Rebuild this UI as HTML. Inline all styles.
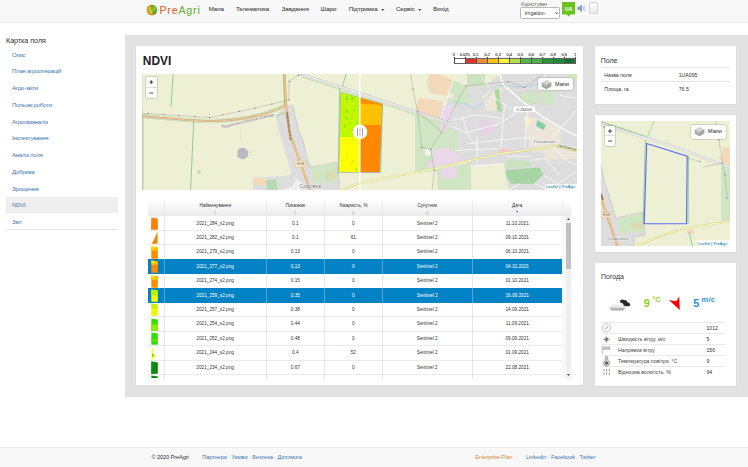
<!DOCTYPE html>
<html><head><meta charset="utf-8"><style>
html,body{margin:0;padding:0;}
body{width:748px;height:467px;overflow:hidden;position:relative;background:#fff;font-family:'Liberation Sans',sans-serif;}
.t{position:absolute;line-height:1;white-space:nowrap;}
.b{position:absolute;}
</style></head><body>
<div class="b" style="left:0.00px;top:0.00px;width:748.00px;height:22.00px;background:#f8f8f8;border-bottom:0.6px solid #ededed;"></div>
<svg class="b" style="left:144.6px;top:2.7px" width="14" height="14" viewBox="0 0 14 14">
<defs><linearGradient id="lg2" x1="0.2" y1="0" x2="0.9" y2="1"><stop offset="0" stop-color="#3f8f1e"/><stop offset="0.5" stop-color="#8cc43c"/><stop offset="1" stop-color="#3a7d1c"/></linearGradient>
<linearGradient id="lg" x1="0" y1="0" x2="1" y2="1"><stop offset="0" stop-color="#f0a020"/><stop offset="1" stop-color="#d88a10"/></linearGradient></defs>
<circle cx="7" cy="7" r="6.3" fill="#fff" opacity="0.9"/>
<circle cx="7" cy="7" r="5.2" fill="url(#lg2)"/>
<path d="M4.2 2.6C2.4 3.6 1.7 5.4 1.8 7.2C2 9.8 4 11.9 6.6 12.2C7.6 12.3 8.5 12.1 9.4 11.8C7.6 10.2 6.6 8.2 6.4 5.8C6.3 4.4 6.5 3.2 6.6 1.85C5.8 1.9 5 2.2 4.2 2.6Z" fill="url(#lg)"/>
<path d="M3.8 4.6C3.2 7.2 4.4 9.8 7 11.3C7.2 9 6.4 6.4 5 4Z" fill="#c4d62c" opacity="0.9"/>
<circle cx="7" cy="7" r="5.2" fill="none" stroke="#5a6a40" stroke-width="0.3" opacity="0.5"/>
</svg>
<div class="t" style="left:159.40px;top:4.93px;font-size:10.6px;color:#333;font-weight:normal;letter-spacing:0.85px;-webkit-text-stroke:0.35px currentColor;"><span style="color:#dc6436;-webkit-text-stroke:0.12px #dc6436">Pre</span><span style="color:#66b236;-webkit-text-stroke:0.12px #66b236">Agri</span></div>
<div class="t" style="left:208.70px;top:6.45px;font-size:6.2px;color:#3a3a3a;font-weight:normal;letter-spacing:-0.08px;-webkit-text-stroke:0.08px #666;">Мапа</div>
<div class="t" style="left:236.00px;top:6.45px;font-size:6.2px;color:#3a3a3a;font-weight:normal;letter-spacing:-0.08px;-webkit-text-stroke:0.08px #666;">Телематика</div>
<div class="t" style="left:281.70px;top:6.45px;font-size:6.2px;color:#3a3a3a;font-weight:normal;letter-spacing:-0.08px;-webkit-text-stroke:0.08px #666;">Завдання</div>
<div class="t" style="left:320.60px;top:6.45px;font-size:6.2px;color:#3a3a3a;font-weight:normal;letter-spacing:-0.08px;-webkit-text-stroke:0.08px #666;">Шари</div>
<div class="t" style="left:348.70px;top:6.45px;font-size:6.2px;color:#3a3a3a;font-weight:normal;letter-spacing:-0.08px;-webkit-text-stroke:0.08px #666;">Підтримка</div>
<div class="t" style="left:395.90px;top:6.45px;font-size:6.2px;color:#3a3a3a;font-weight:normal;letter-spacing:-0.08px;-webkit-text-stroke:0.08px #666;">Сервіс</div>
<div class="t" style="left:433.30px;top:6.45px;font-size:6.2px;color:#3a3a3a;font-weight:normal;letter-spacing:-0.08px;-webkit-text-stroke:0.08px #666;">Вихід</div>
<svg class="b" style="left:381.20px;top:9.3px" width="3.6" height="2" viewBox="0 0 3.6 2"><path d="M0 0H3.6L1.8 2Z" fill="#555"/></svg>
<svg class="b" style="left:418.10px;top:9.3px" width="3.6" height="2" viewBox="0 0 3.6 2"><path d="M0 0H3.6L1.8 2Z" fill="#555"/></svg>
<div class="t" style="left:521.00px;top:2.51px;font-size:4.95px;color:#666;font-weight:normal;">Користувач</div>
<div class="b" style="left:520.40px;top:7.40px;width:39.30px;height:11.30px;background:#fff;border:0.6px solid #b8b8b8;border-radius:1.6px;box-sizing:border-box;"></div>
<div class="t" style="left:524.70px;top:10.80px;font-size:5.2px;color:#333;font-weight:normal;">irrigation</div>
<svg class="b" style="left:554.5px;top:12px" width="3.4" height="2.4" viewBox="0 0 3.4 2.4"><path d="M0.4 0.4L1.7 1.8L3.0 0.4" fill="none" stroke="#222" stroke-width="0.9"/></svg>
<svg class="b" style="left:561.9px;top:2px" width="13.2" height="15" viewBox="0 0 13.2 15"><path d="M0 0H13.2V12.4H8.2L6.6 14.8L5 12.4H0Z" fill="#6cc21c"/></svg>
<div class="t" style="left:468.50px;width:200px;text-align:center;top:6.50px;font-size:5.2px;color:#fff;font-weight:bold;">UA</div>
<svg class="b" style="left:576.8px;top:3.8px" width="9.2" height="8.6" viewBox="0 0 9.2 8.6">
<path d="M0.3 2.8H2.2L5 0.4V8.2L2.2 5.8H0.3Z" fill="#8aa0b8"/><path d="M6 2.4Q7 4.3 6 6.2" stroke="#9bb3cc" stroke-width="0.9" fill="none"/><path d="M7.3 1.4Q8.9 4.3 7.3 7.2" stroke="#b5c8dc" stroke-width="0.8" fill="none"/></svg>
<div class="b" style="left:588.90px;top:2.00px;width:9.60px;height:12.00px;background:linear-gradient(#fdfdfd,#e8e8e8);border:0.5px solid #d4d4d4;border-radius:1px;box-sizing:border-box;"></div>
<div class="t" style="left:6.00px;top:37.11px;font-size:7.2px;color:#333;font-weight:normal;letter-spacing:-0.05px;">Картка поля</div>
<div class="b" style="left:6.00px;top:197.00px;width:111.80px;height:16.00px;background:#eeeeee;"></div>
<div class="t" style="left:12.00px;top:51.74px;font-size:6.1px;color:#4677b8;font-weight:normal;letter-spacing:-0.28px;">Опис</div>
<div class="t" style="left:12.00px;top:68.49px;font-size:6.1px;color:#4677b8;font-weight:normal;letter-spacing:-0.28px;">План агрооперацій</div>
<div class="t" style="left:12.00px;top:85.24px;font-size:6.1px;color:#4677b8;font-weight:normal;letter-spacing:-0.28px;">Агро-звіти</div>
<div class="t" style="left:12.00px;top:101.99px;font-size:6.1px;color:#4677b8;font-weight:normal;letter-spacing:-0.28px;">Польові роботи</div>
<div class="t" style="left:12.00px;top:118.74px;font-size:6.1px;color:#4677b8;font-weight:normal;letter-spacing:-0.28px;">Агрохіманаліз</div>
<div class="t" style="left:12.00px;top:135.49px;font-size:6.1px;color:#4677b8;font-weight:normal;letter-spacing:-0.28px;">Інспектування</div>
<div class="t" style="left:12.00px;top:152.24px;font-size:6.1px;color:#4677b8;font-weight:normal;letter-spacing:-0.28px;">Аналіз поля</div>
<div class="t" style="left:12.00px;top:168.99px;font-size:6.1px;color:#4677b8;font-weight:normal;letter-spacing:-0.28px;">Добрива</div>
<div class="t" style="left:12.00px;top:185.74px;font-size:6.1px;color:#4677b8;font-weight:normal;letter-spacing:-0.28px;">Зрощення</div>
<div class="t" style="left:12.00px;top:202.49px;font-size:6.1px;color:#4677b8;font-weight:normal;letter-spacing:-0.28px;">NDVI</div>
<div class="t" style="left:12.00px;top:219.24px;font-size:6.1px;color:#4677b8;font-weight:normal;letter-spacing:-0.28px;">Звіт</div>
<div class="b" style="left:6.00px;top:229.30px;width:112.00px;height:0.50px;background:#e6e6e6;"></div>
<div class="b" style="left:125.00px;top:35.00px;width:623.00px;height:361.60px;background:#e2e2e2;"></div>
<div class="b" style="left:136.00px;top:46.00px;width:447.00px;height:339.00px;background:#fff;box-shadow:0 0.5px 1.5px rgba(0,0,0,0.1);"></div>
<div class="b" style="left:595.00px;top:46.00px;width:141.30px;height:58.00px;background:#fff;box-shadow:0 0.5px 1.5px rgba(0,0,0,0.1);"></div>
<div class="b" style="left:595.00px;top:115.00px;width:141.30px;height:137.00px;background:#fff;box-shadow:0 0.5px 1.5px rgba(0,0,0,0.1);"></div>
<div class="b" style="left:595.00px;top:263.00px;width:141.30px;height:123.00px;background:#fff;box-shadow:0 0.5px 1.5px rgba(0,0,0,0.1);"></div>
<div class="b" style="left:0.00px;top:447.20px;width:748.00px;height:19.80px;background:#f8f8f8;border-top:0.5px solid #efefef;"></div>
<div class="t" style="left:151.40px;top:455.42px;font-size:5.65px;color:#333;font-weight:normal;letter-spacing:-0.1px;">© 2020 PreAgri</div>
<div class="t" style="left:202.20px;top:455.42px;font-size:5.65px;color:#3f7ab5;font-weight:normal;letter-spacing:-0.1px;">Партнери <span style="color:#999">·</span> Умови <span style="color:#999">·</span> Безпека <span style="color:#999">·</span> Допомога</div>
<div class="t" style="left:475.20px;top:455.42px;font-size:5.65px;color:#d48a3c;font-weight:normal;letter-spacing:-0.1px;">Enterprise Plan</div>
<div class="t" style="left:526.00px;top:455.42px;font-size:5.65px;color:#3f7ab5;font-weight:normal;letter-spacing:-0.1px;">Linkedin <span style="color:#999">·</span> Facebook <span style="color:#999">·</span> Twitter</div>
<div class="t" style="left:142.80px;top:55.83px;font-size:11.9px;color:#222;font-weight:bold;">NDVI</div>
<div class="b" style="left:453.80px;top:58.00px;width:11.00px;height:5.80px;background:#ffffff;"></div>
<div class="b" style="left:464.80px;top:58.00px;width:11.00px;height:5.80px;background:#e3312e;"></div>
<div class="b" style="left:475.80px;top:58.00px;width:11.50px;height:5.80px;background:#f08a3a;"></div>
<div class="b" style="left:487.30px;top:58.00px;width:10.80px;height:5.80px;background:#ffc20e;"></div>
<div class="b" style="left:498.10px;top:58.00px;width:11.20px;height:5.80px;background:#fff33b;"></div>
<div class="b" style="left:509.30px;top:58.00px;width:11.00px;height:5.80px;background:#b5dd4a;"></div>
<div class="b" style="left:520.30px;top:58.00px;width:11.00px;height:5.80px;background:#55b84a;"></div>
<div class="b" style="left:531.30px;top:58.00px;width:11.00px;height:5.80px;background:#4ab04a;"></div>
<div class="b" style="left:542.30px;top:58.00px;width:10.90px;height:5.80px;background:#24963c;"></div>
<div class="b" style="left:553.20px;top:58.00px;width:11.10px;height:5.80px;background:#1f8a3a;"></div>
<div class="b" style="left:564.30px;top:58.00px;width:10.70px;height:5.80px;background:#1b6e31;"></div>
<div class="b" style="left:453.80px;top:58.00px;width:121.20px;height:5.80px;border:0.4px solid #666;box-sizing:border-box;"></div>
<div class="b" style="left:453.60px;top:57.00px;width:0.40px;height:6.80px;background:#555;"></div>
<div class="t" style="left:353.80px;width:200px;text-align:center;top:52.51px;font-size:4.0px;color:#222;font-weight:normal;-webkit-text-stroke:0.1px #444;">0</div>
<div class="b" style="left:464.60px;top:57.00px;width:0.40px;height:6.80px;background:#555;"></div>
<div class="t" style="left:364.80px;width:200px;text-align:center;top:52.51px;font-size:4.0px;color:#222;font-weight:normal;-webkit-text-stroke:0.1px #444;">0.025</div>
<div class="b" style="left:475.60px;top:57.00px;width:0.40px;height:6.80px;background:#555;"></div>
<div class="t" style="left:375.80px;width:200px;text-align:center;top:52.51px;font-size:4.0px;color:#222;font-weight:normal;-webkit-text-stroke:0.1px #444;">0.1</div>
<div class="b" style="left:487.10px;top:57.00px;width:0.40px;height:6.80px;background:#555;"></div>
<div class="t" style="left:387.30px;width:200px;text-align:center;top:52.51px;font-size:4.0px;color:#222;font-weight:normal;-webkit-text-stroke:0.1px #444;">0.2</div>
<div class="b" style="left:497.90px;top:57.00px;width:0.40px;height:6.80px;background:#555;"></div>
<div class="t" style="left:398.10px;width:200px;text-align:center;top:52.51px;font-size:4.0px;color:#222;font-weight:normal;-webkit-text-stroke:0.1px #444;">0.3</div>
<div class="b" style="left:509.10px;top:57.00px;width:0.40px;height:6.80px;background:#555;"></div>
<div class="t" style="left:409.30px;width:200px;text-align:center;top:52.51px;font-size:4.0px;color:#222;font-weight:normal;-webkit-text-stroke:0.1px #444;">0.4</div>
<div class="b" style="left:520.10px;top:57.00px;width:0.40px;height:6.80px;background:#555;"></div>
<div class="t" style="left:420.30px;width:200px;text-align:center;top:52.51px;font-size:4.0px;color:#222;font-weight:normal;-webkit-text-stroke:0.1px #444;">0.5</div>
<div class="b" style="left:531.10px;top:57.00px;width:0.40px;height:6.80px;background:#555;"></div>
<div class="t" style="left:431.30px;width:200px;text-align:center;top:52.51px;font-size:4.0px;color:#222;font-weight:normal;-webkit-text-stroke:0.1px #444;">0.6</div>
<div class="b" style="left:542.10px;top:57.00px;width:0.40px;height:6.80px;background:#555;"></div>
<div class="t" style="left:442.30px;width:200px;text-align:center;top:52.51px;font-size:4.0px;color:#222;font-weight:normal;-webkit-text-stroke:0.1px #444;">0.7</div>
<div class="b" style="left:553.00px;top:57.00px;width:0.40px;height:6.80px;background:#555;"></div>
<div class="t" style="left:453.20px;width:200px;text-align:center;top:52.51px;font-size:4.0px;color:#222;font-weight:normal;-webkit-text-stroke:0.1px #444;">0.8</div>
<div class="b" style="left:564.10px;top:57.00px;width:0.40px;height:6.80px;background:#555;"></div>
<div class="t" style="left:464.30px;width:200px;text-align:center;top:52.51px;font-size:4.0px;color:#222;font-weight:normal;-webkit-text-stroke:0.1px #444;">0.9</div>
<div class="b" style="left:574.80px;top:57.00px;width:0.40px;height:6.80px;background:#555;"></div>
<div class="t" style="left:475.00px;width:200px;text-align:center;top:52.51px;font-size:4.0px;color:#222;font-weight:normal;-webkit-text-stroke:0.1px #444;">1</div>
<div class="b" style="left:148.00px;top:202.00px;width:414.00px;height:13.80px;background:linear-gradient(#fbfbfb,#ececec);"></div>
<div class="b" style="left:562.00px;top:202.00px;width:9.20px;height:13.80px;background:linear-gradient(#fbfbfb,#ececec);"></div>
<div class="t" style="left:115.15px;width:200px;text-align:center;top:204.21px;font-size:4.6px;color:#333;font-weight:normal;">Найменування</div>
<svg class="b" style="left:211.95px;top:208.8px" width="6.4" height="8" viewBox="-2 -2 6.4 8"><path d="M0.3 1.6L1.2 0.5L2.1 1.6M0.3 2.4L1.2 3.5L2.1 2.4" fill="none" stroke="#8a8a8a" stroke-width="0.5"/></svg>
<div class="t" style="left:195.30px;width:200px;text-align:center;top:204.21px;font-size:4.6px;color:#333;font-weight:normal;">Показник</div>
<svg class="b" style="left:292.10px;top:208.8px" width="6.4" height="8" viewBox="-2 -2 6.4 8"><path d="M0.3 1.6L1.2 0.5L2.1 1.6M0.3 2.4L1.2 3.5L2.1 2.4" fill="none" stroke="#8a8a8a" stroke-width="0.5"/></svg>
<div class="t" style="left:253.35px;width:200px;text-align:center;top:204.21px;font-size:4.6px;color:#333;font-weight:normal;">Хмарність, %</div>
<svg class="b" style="left:350.15px;top:208.8px" width="6.4" height="8" viewBox="-2 -2 6.4 8"><path d="M0.3 1.6L1.2 0.5L2.1 1.6M0.3 2.4L1.2 3.5L2.1 2.4" fill="none" stroke="#8a8a8a" stroke-width="0.5"/></svg>
<div class="t" style="left:327.20px;width:200px;text-align:center;top:204.21px;font-size:4.6px;color:#333;font-weight:normal;">Супутник</div>
<svg class="b" style="left:424.00px;top:208.8px" width="6.4" height="8" viewBox="-2 -2 6.4 8"><path d="M0.3 1.6L1.2 0.5L2.1 1.6M0.3 2.4L1.2 3.5L2.1 2.4" fill="none" stroke="#8a8a8a" stroke-width="0.5"/></svg>
<div class="t" style="left:417.20px;width:200px;text-align:center;top:204.21px;font-size:4.6px;color:#333;font-weight:normal;">Дата</div>
<svg class="b" style="left:515.90px;top:211.3px" width="2.6" height="1.8" viewBox="0 0 2.6 1.8"><path d="M0 0H2.6L1.3 1.8Z" fill="#2a7fc9"/></svg>
<div class="b" style="left:164.15px;top:202.00px;width:0.50px;height:176.50px;background:#e8e8e8;"></div>
<div class="b" style="left:265.65px;top:202.00px;width:0.50px;height:176.50px;background:#e8e8e8;"></div>
<div class="b" style="left:324.45px;top:202.00px;width:0.50px;height:176.50px;background:#e8e8e8;"></div>
<div class="b" style="left:381.75px;top:202.00px;width:0.50px;height:176.50px;background:#e8e8e8;"></div>
<div class="b" style="left:472.15px;top:202.00px;width:0.50px;height:176.50px;background:#e8e8e8;"></div>
<div class="b" style="left:561.75px;top:202.00px;width:0.50px;height:176.50px;background:#e8e8e8;"></div>
<div class="b" style="left:148px;top:215.8px;width:414px;height:162.7px;overflow:hidden;background:#fff">
<div class="b" style="left:0;top:14.20px;width:414px;height:0.6px;background:#ebebeb"></div>
<div class="b" style="left:0;top:28.60px;width:414px;height:0.6px;background:#ebebeb"></div>
<div class="b" style="left:0;top:43.60px;width:414px;height:14.40px;background:#0383c6"></div>
<div class="b" style="left:0;top:72.40px;width:414px;height:14.40px;background:#0383c6"></div>
<div class="b" style="left:0;top:100.60px;width:414px;height:0.6px;background:#ebebeb"></div>
<div class="b" style="left:0;top:115.00px;width:414px;height:0.6px;background:#ebebeb"></div>
<div class="b" style="left:0;top:129.40px;width:414px;height:0.6px;background:#ebebeb"></div>
<div class="b" style="left:0;top:143.80px;width:414px;height:0.6px;background:#ebebeb"></div>
<div class="b" style="left:0;top:158.20px;width:414px;height:0.6px;background:#ebebeb"></div>
<div class="b" style="left:0;top:172.60px;width:414px;height:0.6px;background:#ebebeb"></div>
</div>
<div class="b" style="left:164.15px;top:215.80px;width:0.50px;height:162.70px;background:rgba(200,200,200,0.45);"></div>
<div class="b" style="left:265.65px;top:215.80px;width:0.50px;height:162.70px;background:rgba(200,200,200,0.45);"></div>
<div class="b" style="left:324.45px;top:215.80px;width:0.50px;height:162.70px;background:rgba(200,200,200,0.45);"></div>
<div class="b" style="left:381.75px;top:215.80px;width:0.50px;height:162.70px;background:rgba(200,200,200,0.45);"></div>
<div class="b" style="left:472.15px;top:215.80px;width:0.50px;height:162.70px;background:rgba(200,200,200,0.45);"></div>
<div class="b" style="left:561.75px;top:215.80px;width:0.50px;height:162.70px;background:rgba(200,200,200,0.45);"></div>
<div class="t" style="left:115.15px;width:200px;text-align:center;top:221.62px;font-size:4.7px;color:#333;font-weight:normal;">2021_284_s2.png</div>
<div class="t" style="left:195.30px;width:200px;text-align:center;top:221.62px;font-size:4.7px;color:#333;font-weight:normal;">0.1</div>
<div class="t" style="left:253.35px;width:200px;text-align:center;top:221.62px;font-size:4.7px;color:#333;font-weight:normal;">0</div>
<div class="t" style="left:327.20px;width:200px;text-align:center;top:221.62px;font-size:4.7px;color:#333;font-weight:normal;">Sentinel 2</div>
<div class="t" style="left:417.20px;width:200px;text-align:center;top:221.62px;font-size:4.7px;color:#333;font-weight:normal;">11.10.2021</div>
<div class="t" style="left:115.15px;width:200px;text-align:center;top:236.02px;font-size:4.7px;color:#333;font-weight:normal;">2021_282_s2.png</div>
<div class="t" style="left:195.30px;width:200px;text-align:center;top:236.02px;font-size:4.7px;color:#333;font-weight:normal;">0.1</div>
<div class="t" style="left:253.35px;width:200px;text-align:center;top:236.02px;font-size:4.7px;color:#333;font-weight:normal;">61</div>
<div class="t" style="left:327.20px;width:200px;text-align:center;top:236.02px;font-size:4.7px;color:#333;font-weight:normal;">Sentinel 2</div>
<div class="t" style="left:417.20px;width:200px;text-align:center;top:236.02px;font-size:4.7px;color:#333;font-weight:normal;">09.10.2021</div>
<div class="t" style="left:115.15px;width:200px;text-align:center;top:250.42px;font-size:4.7px;color:#333;font-weight:normal;">2021_279_s2.png</div>
<div class="t" style="left:195.30px;width:200px;text-align:center;top:250.42px;font-size:4.7px;color:#333;font-weight:normal;">0.13</div>
<div class="t" style="left:253.35px;width:200px;text-align:center;top:250.42px;font-size:4.7px;color:#333;font-weight:normal;">0</div>
<div class="t" style="left:327.20px;width:200px;text-align:center;top:250.42px;font-size:4.7px;color:#333;font-weight:normal;">Sentinel 2</div>
<div class="t" style="left:417.20px;width:200px;text-align:center;top:250.42px;font-size:4.7px;color:#333;font-weight:normal;">06.10.2021</div>
<div class="t" style="left:115.15px;width:200px;text-align:center;top:264.82px;font-size:4.7px;color:#fff;font-weight:normal;">2021_277_s2.png</div>
<div class="t" style="left:195.30px;width:200px;text-align:center;top:264.82px;font-size:4.7px;color:#fff;font-weight:normal;">0.13</div>
<div class="t" style="left:253.35px;width:200px;text-align:center;top:264.82px;font-size:4.7px;color:#fff;font-weight:normal;">0</div>
<div class="t" style="left:327.20px;width:200px;text-align:center;top:264.82px;font-size:4.7px;color:#fff;font-weight:normal;">Sentinel 2</div>
<div class="t" style="left:417.20px;width:200px;text-align:center;top:264.82px;font-size:4.7px;color:#fff;font-weight:normal;">04.10.2021</div>
<div class="t" style="left:115.15px;width:200px;text-align:center;top:279.22px;font-size:4.7px;color:#333;font-weight:normal;">2021_274_s2.png</div>
<div class="t" style="left:195.30px;width:200px;text-align:center;top:279.22px;font-size:4.7px;color:#333;font-weight:normal;">0.15</div>
<div class="t" style="left:253.35px;width:200px;text-align:center;top:279.22px;font-size:4.7px;color:#333;font-weight:normal;">0</div>
<div class="t" style="left:327.20px;width:200px;text-align:center;top:279.22px;font-size:4.7px;color:#333;font-weight:normal;">Sentinel 2</div>
<div class="t" style="left:417.20px;width:200px;text-align:center;top:279.22px;font-size:4.7px;color:#333;font-weight:normal;">01.10.2021</div>
<div class="t" style="left:115.15px;width:200px;text-align:center;top:293.62px;font-size:4.7px;color:#fff;font-weight:normal;">2021_259_s2.png</div>
<div class="t" style="left:195.30px;width:200px;text-align:center;top:293.62px;font-size:4.7px;color:#fff;font-weight:normal;">0.35</div>
<div class="t" style="left:253.35px;width:200px;text-align:center;top:293.62px;font-size:4.7px;color:#fff;font-weight:normal;">0</div>
<div class="t" style="left:327.20px;width:200px;text-align:center;top:293.62px;font-size:4.7px;color:#fff;font-weight:normal;">Sentinel 2</div>
<div class="t" style="left:417.20px;width:200px;text-align:center;top:293.62px;font-size:4.7px;color:#fff;font-weight:normal;">16.09.2021</div>
<div class="t" style="left:115.15px;width:200px;text-align:center;top:308.02px;font-size:4.7px;color:#333;font-weight:normal;">2021_257_s2.png</div>
<div class="t" style="left:195.30px;width:200px;text-align:center;top:308.02px;font-size:4.7px;color:#333;font-weight:normal;">0.38</div>
<div class="t" style="left:253.35px;width:200px;text-align:center;top:308.02px;font-size:4.7px;color:#333;font-weight:normal;">0</div>
<div class="t" style="left:327.20px;width:200px;text-align:center;top:308.02px;font-size:4.7px;color:#333;font-weight:normal;">Sentinel 2</div>
<div class="t" style="left:417.20px;width:200px;text-align:center;top:308.02px;font-size:4.7px;color:#333;font-weight:normal;">14.09.2021</div>
<div class="t" style="left:115.15px;width:200px;text-align:center;top:322.42px;font-size:4.7px;color:#333;font-weight:normal;">2021_254_s2.png</div>
<div class="t" style="left:195.30px;width:200px;text-align:center;top:322.42px;font-size:4.7px;color:#333;font-weight:normal;">0.44</div>
<div class="t" style="left:253.35px;width:200px;text-align:center;top:322.42px;font-size:4.7px;color:#333;font-weight:normal;">0</div>
<div class="t" style="left:327.20px;width:200px;text-align:center;top:322.42px;font-size:4.7px;color:#333;font-weight:normal;">Sentinel 2</div>
<div class="t" style="left:417.20px;width:200px;text-align:center;top:322.42px;font-size:4.7px;color:#333;font-weight:normal;">11.09.2021</div>
<div class="t" style="left:115.15px;width:200px;text-align:center;top:336.82px;font-size:4.7px;color:#333;font-weight:normal;">2021_252_s2.png</div>
<div class="t" style="left:195.30px;width:200px;text-align:center;top:336.82px;font-size:4.7px;color:#333;font-weight:normal;">0.48</div>
<div class="t" style="left:253.35px;width:200px;text-align:center;top:336.82px;font-size:4.7px;color:#333;font-weight:normal;">0</div>
<div class="t" style="left:327.20px;width:200px;text-align:center;top:336.82px;font-size:4.7px;color:#333;font-weight:normal;">Sentinel 2</div>
<div class="t" style="left:417.20px;width:200px;text-align:center;top:336.82px;font-size:4.7px;color:#333;font-weight:normal;">09.09.2021</div>
<div class="t" style="left:115.15px;width:200px;text-align:center;top:351.22px;font-size:4.7px;color:#333;font-weight:normal;">2021_244_s2.png</div>
<div class="t" style="left:195.30px;width:200px;text-align:center;top:351.22px;font-size:4.7px;color:#333;font-weight:normal;">0.4</div>
<div class="t" style="left:253.35px;width:200px;text-align:center;top:351.22px;font-size:4.7px;color:#333;font-weight:normal;">52</div>
<div class="t" style="left:327.20px;width:200px;text-align:center;top:351.22px;font-size:4.7px;color:#333;font-weight:normal;">Sentinel 2</div>
<div class="t" style="left:417.20px;width:200px;text-align:center;top:351.22px;font-size:4.7px;color:#333;font-weight:normal;">01.09.2021</div>
<div class="t" style="left:115.15px;width:200px;text-align:center;top:365.62px;font-size:4.7px;color:#333;font-weight:normal;">2021_234_s2.png</div>
<div class="t" style="left:195.30px;width:200px;text-align:center;top:365.62px;font-size:4.7px;color:#333;font-weight:normal;">0.67</div>
<div class="t" style="left:253.35px;width:200px;text-align:center;top:365.62px;font-size:4.7px;color:#333;font-weight:normal;">0</div>
<div class="t" style="left:327.20px;width:200px;text-align:center;top:365.62px;font-size:4.7px;color:#333;font-weight:normal;">Sentinel 2</div>
<div class="t" style="left:417.20px;width:200px;text-align:center;top:365.62px;font-size:4.7px;color:#333;font-weight:normal;">22.08.2021</div>
<svg class="b" style="left:151.1px;top:217.00px;overflow:hidden" width="7.2" height="13.00" viewBox="0 0 7.2 13.00"><path d="M0.3 0.5L6.8 1.6V12.8H0Z" fill="#ff7f00"/></svg>
<svg class="b" style="left:151.1px;top:231.40px;overflow:hidden" width="7.2" height="13.00" viewBox="0 0 7.2 13.00"><path d="M6.6 0.5V12.8H0.8L3.5 7.5Z" fill="#ff8000"/></svg>
<svg class="b" style="left:151.1px;top:245.80px;overflow:hidden" width="7.2" height="13.00" viewBox="0 0 7.2 13.00"><path d="M0.4 0.4L6.8 1.6V12.8H0.3Z" fill="#ff8a00"/><path d="M0.4 0.4L6.8 1.6V4.8H0.3Z" fill="#ffc400"/><path d="M0.4 0.4L4 1V3H0.3Z" fill="#ffde10"/></svg>
<svg class="b" style="left:151.1px;top:260.20px;overflow:hidden" width="7.2" height="13.00" viewBox="0 0 7.2 13.00"><path d="M0.4 0.4L6.8 1.6V12.8H0.3Z" fill="#ff8a00"/><path d="M0.4 0.4L6.8 1.6V4.8H0.3Z" fill="#ffc400"/><path d="M0.4 0.4L4 1V3H0.3Z" fill="#ffde10"/></svg>
<svg class="b" style="left:151.1px;top:274.60px;overflow:hidden" width="7.2" height="13.00" viewBox="0 0 7.2 13.00"><path d="M0.4 0.4L6.8 1.6V12.8H0.3Z" fill="#ff8a00"/><path d="M0.4 0.4L6.8 1.6V5H0.3Z" fill="#ffc000"/><path d="M0.4 0.4L4 1V3H0.3Z" fill="#ffe010"/></svg>
<svg class="b" style="left:151.1px;top:289.00px;overflow:hidden" width="7.2" height="13.00" viewBox="0 0 7.2 13.00"><path d="M0.4 0.4L6.8 1.6V12.8H0.3Z" fill="#f4ff00"/><path d="M0.4 0.4L6.8 1.6V6.5H0.3Z" fill="#b8f200"/></svg>
<svg class="b" style="left:151.1px;top:303.40px;overflow:hidden" width="7.2" height="13.00" viewBox="0 0 7.2 13.00"><path d="M0.4 0.4L6.8 1.6V12.8H0.3Z" fill="#f0f800"/><path d="M0.4 0.4L6.8 1.6V5.5H0.3Z" fill="#c8f010"/></svg>
<svg class="b" style="left:151.1px;top:317.80px;overflow:hidden" width="7.2" height="13.00" viewBox="0 0 7.2 13.00"><path d="M0.4 0.4L6.8 1.6V12.8H0.3Z" fill="#38e000"/><path d="M0.3 6.5L6.8 6.5V12.8H0.3Z" fill="#90ee00"/></svg>
<svg class="b" style="left:151.1px;top:332.20px;overflow:hidden" width="7.2" height="13.00" viewBox="0 0 7.2 13.00"><path d="M0.4 0.4L6.8 1.6V12.8H0.3Z" fill="#30dc10"/><path d="M0.3 7L6.8 6V10H0.3Z" fill="#58e010"/></svg>
<svg class="b" style="left:151.1px;top:346.60px;overflow:hidden" width="7.2" height="13.00" viewBox="0 0 7.2 13.00"><path d="M0.8 0.8L2.5 1.5L2 6L4.5 8.5L2 12L0.8 12.8Z" fill="#ffff10"/><path d="M0.8 6L3.5 8.2L1 10.5Z" fill="#70e000"/></svg>
<svg class="b" style="left:151.1px;top:361.00px;overflow:hidden" width="7.2" height="13.00" viewBox="0 0 7.2 13.00"><path d="M0.4 0.4L6.8 1.6V12.8H0.3Z" fill="#0a860a"/><path d="M0.4 0.4L3.5 1V12.8H0.3Z" fill="#109010"/></svg>
<svg class="b" style="left:151.1px;top:375.40px;overflow:hidden" width="7.2" height="2.90" viewBox="0 0 7.2 2.90"><path d="M0.4 0.4L6.8 1.6V6H0.3Z" fill="#0a860a"/></svg>
<div class="b" style="left:562.20px;top:216.00px;width:3.50px;height:162.50px;background:#f9f9f9;"></div>
<div class="b" style="left:565.70px;top:216.00px;width:5.50px;height:162.50px;background:#f0f0f0;"></div>
<div class="b" style="left:565.90px;top:223.00px;width:4.70px;height:46.40px;background:#c1c1c1;"></div>
<svg class="b" style="left:566.8px;top:218.4px" width="3" height="2" viewBox="0 0 3 2"><path d="M0 2H3L1.5 0Z" fill="#555"/></svg>
<svg class="b" style="left:566.8px;top:373.8px" width="3" height="2" viewBox="0 0 3 2"><path d="M0 0H3L1.5 2Z" fill="#555"/></svg>
<div class="t" style="left:600.70px;top:56.87px;font-size:7.0px;color:#333;font-weight:normal;">Поле</div>
<div class="b" style="left:600.70px;top:67.30px;width:129.80px;height:0.50px;background:#e4e4e4;"></div>
<div class="t" style="left:604.20px;top:72.60px;font-size:5.2px;color:#333;font-weight:normal;">Назва поля</div>
<div class="t" style="left:678.70px;top:72.60px;font-size:5.2px;color:#333;font-weight:normal;">1UA095</div>
<div class="b" style="left:600.70px;top:81.40px;width:129.80px;height:0.50px;background:#e4e4e4;"></div>
<div class="t" style="left:604.20px;top:86.70px;font-size:5.2px;color:#333;font-weight:normal;">Площа, га</div>
<div class="t" style="left:678.70px;top:86.70px;font-size:5.2px;color:#333;font-weight:normal;">76.5</div>
<div class="t" style="left:601.10px;top:273.66px;font-size:6.9px;color:#333;font-weight:normal;">Погода</div>
<div class="t" style="left:643.80px;top:297.67px;font-size:10.9px;color:#8fd014;font-weight:bold;">9</div>
<div class="t" style="left:652.30px;top:296.02px;font-size:7.3px;color:#8fd014;font-weight:bold;">°C</div>
<div class="t" style="left:693.20px;top:297.87px;font-size:10.9px;color:#2b8fd6;font-weight:bold;">5</div>
<div class="t" style="left:701.60px;top:295.85px;font-size:7.5px;color:#2b8fd6;font-weight:bold;letter-spacing:0.15px;">m/c</div>
<svg class="b" style="left:668px;top:296px" width="12.5" height="14.5" viewBox="668 296 12.5 14.5"><path d="M679.2 296.4L679.8 309.9L668.9 300.1L676.3 301.2Z" fill="#f00"/></svg>
<svg class="b" style="left:608px;top:298px" width="24" height="14" viewBox="0 0 24 14">
<defs><linearGradient id="cg" x1="0" y1="0" x2="0" y2="1"><stop offset="0" stop-color="#ffffff"/><stop offset="0.7" stop-color="#e8e8e8"/><stop offset="1" stop-color="#9a9a9a"/></linearGradient></defs>
<path d="M12 2.8C13 1.5 15 1.2 16.2 2.2C17.6 1.8 19.2 2.8 19.3 4.2C21 4.4 22.5 5.5 22.3 6.8C22 8.2 20.5 8.4 19 8.2H13Z" fill="#2a2a2a"/>
<path d="M3 11.5C1 11.5 0.8 9 2.6 8.6C2.8 6.6 4.6 5.4 6.3 6C7.2 3.6 10.4 3 12.2 4.8C14 4.4 15.8 5.8 15.6 7.6C17.2 7.8 17.8 9.2 17.3 10.4C17 11.2 16.2 11.5 15.4 11.5Z" fill="url(#cg)"/>
<path d="M3 11.6H15.6L15 12.6H3.6Z" fill="#8a8a8a" opacity="0.8"/>
</svg>
<div class="b" style="left:601.00px;top:322.25px;width:123.70px;height:0.50px;background:#e9e9e9;"></div>
<div class="b" style="left:601.00px;top:333.05px;width:123.70px;height:0.50px;background:#e9e9e9;"></div>
<div class="b" style="left:601.00px;top:343.95px;width:123.70px;height:0.50px;background:#e9e9e9;"></div>
<div class="b" style="left:601.00px;top:354.95px;width:123.70px;height:0.50px;background:#e9e9e9;"></div>
<div class="b" style="left:601.00px;top:366.05px;width:123.70px;height:0.50px;background:#e9e9e9;"></div>
<div class="t" style="left:706.40px;top:325.90px;font-size:5.2px;color:#333;font-weight:normal;">1012</div>
<div class="t" style="left:618.00px;top:336.85px;font-size:5.2px;color:#444;font-weight:normal;">Швидкість вітру, м/с</div>
<div class="t" style="left:706.40px;top:336.85px;font-size:5.2px;color:#333;font-weight:normal;">5</div>
<div class="t" style="left:618.00px;top:347.80px;font-size:5.2px;color:#444;font-weight:normal;">Напрямок вітру</div>
<div class="t" style="left:706.40px;top:347.80px;font-size:5.2px;color:#333;font-weight:normal;">156</div>
<div class="t" style="left:618.00px;top:358.75px;font-size:5.2px;color:#444;font-weight:normal;">Температура повітря, °C</div>
<div class="t" style="left:706.40px;top:358.75px;font-size:5.2px;color:#333;font-weight:normal;">9</div>
<div class="t" style="left:618.00px;top:369.70px;font-size:5.2px;color:#444;font-weight:normal;">Відносна вологість, %</div>
<div class="t" style="left:706.40px;top:369.70px;font-size:5.2px;color:#333;font-weight:normal;">94</div>
<svg class="b" style="left:598px;top:318px" width="20" height="62" viewBox="598 318 20 62">
<circle cx="606.7" cy="327.7" r="4.2" fill="none" stroke="#9a9a9a" stroke-width="0.55"/>
<path d="M605.2 329.3L608.3 326.1" stroke="#666" stroke-width="0.75"/>
<path d="M606.50 334.80L607.00 338.10L608.83 336.97L607.70 338.80L611.00 339.30L607.70 339.80L608.83 341.63L607.00 340.50L606.50 343.80L606.00 340.50L604.17 341.63L605.30 339.80L602.00 339.30L605.30 338.80L604.17 336.97L606.00 338.10Z" fill="#7a7a7a"/>
<path d="M602.3 346V353.8" stroke="#8a8a8a" stroke-width="0.55"/>
<path d="M602.4 346.4H610.9L609.8 348.1L610.9 349.7H602.4Z" fill="#b0b0b0"/>
<path d="M602.4 347.5H609.5M602.4 348.6H609.5" stroke="#e8e8e8" stroke-width="0.35"/>
<path d="M605.2 357.5A1.3 1.3 0 0 1 607.8 357.5V360.2A3.2 3.2 0 1 1 605.2 360.2Z" fill="#c8c8c8" stroke="#777" stroke-width="0.5"/>
<circle cx="606.5" cy="362.9" r="1.5" fill="#555"/>
<path d="M604 369V371.2M604 372.5V374.7M606.6 369V371.2M606.6 372.5V374.7M609.3 369V371.2M609.3 372.5V374.7" stroke="#666" stroke-width="0.75"/>
</svg>
<svg class="b" style="left:142px;top:73.5px;overflow:hidden" width="435.30" height="116.30" viewBox="142 73.5 435.30 116.30"><rect x="142" y="73.5" width="435.29999999999995" height="116.30000000000001" fill="#eef0d6"/><path d="M453 79.5L467 86L485 85L500 73.5L577.3 73.5L577.3 189.8L508.4 189.8L503.3 163.2L470.8 165.7L462 160L457 150L452 131L441 131L440.5 120Z" fill="#dedddd"/><path d="M429 73.5L439.4 73.5L452.5 79.4L447.5 95L430 93L426.9 81.8Z" fill="#f3d9b9"/><path d="M418.8 97.3L443 101L441 120L418 114.2L415.9 106.8Z" fill="#f3d9b9"/><path d="M415.1 114.5L441 122.5L452 131L457 131L457 150L462 160L436.5 169.7L415.1 173Z" fill="#cfe5c4"/><path d="M436.5 169.7L470 162L470.8 165.7L475 189.8L438 189.8Z" fill="#cfe5c4"/><path d="M453 80L467 86L470 103L455 104L447.5 101Z" fill="#cfe5c4"/><path d="M467 73.5L485 73.5L485 85.5L467 86Z" fill="#cce3c1"/><rect x="448" y="93" width="6" height="5" fill="#efe9de"/><path d="M432 149L447 147.6L460 155L462 161L428 167.2L426 162L433 160.5Z" fill="#ead7e8"/><path d="M440 168L457 166L457 177L440.5 177.8Z" fill="#ead7e8"/><path d="M440.5 105L452 105.5L450 120L443 133L439.5 128Z" fill="#ead7e8"/><path d="M478.3 121.9L490.8 119.4L493.3 131.9L480.8 135.7Z" fill="#e6d3e6"/><rect x="425" y="148" width="6" height="7" fill="#f2f2ee"/><path d="M482 96L495 86L502 88L500 110L486 110Z" fill="#ede6d9"/><path d="M494.6 89.3L499 88L502 110.6L497.5 111Z" fill="#a9d79c"/><path d="M519.6 91.8L537.2 90.5L539.7 101.8L529.7 104.3L520.9 101.8Z" fill="#cfe5c4" stroke="#d9a080" stroke-width="0.35" stroke-dasharray="0.7 0.6"/><path d="M541 90.5L553.5 90.5L553.5 104.3L541 104.3Z" fill="#cfe5c4"/><path d="M567.3 73.5L577.3 73.5L577.3 80L567.3 80Z" fill="#cfe5c4"/><path d="M523.4 115.6L547.2 119.4L559.7 126.9L562.2 146.9L549.7 153.2L530.9 150.7L524.6 123.1Z" fill="#ece6da"/><path d="M545 145.7L577.3 145.7L577.3 158.2L545 158.2Z" fill="#ece6da"/><path d="M537.2 119.4L546 124.4L543.4 129.4L535.9 125.6Z" fill="#88cfa6"/><ellipse cx="527.8" cy="120.6" rx="2.6" ry="3.6" fill="#f6f1b2"/><rect x="498.3" y="148.2" width="12.6" height="5" fill="#f7c9c9"/><path d="M505.8 158.2L530.9 160.7L530.9 165.7L505.8 168Z" fill="#c9e3bf"/><path d="M505.8 169.5L539.7 167L543.4 174.5L533.4 183.3L510.9 183.3L505.8 175Z" fill="#a8d5a4"/><path d="M470.8 165.7L503.3 163.2L508.4 189.8L470.8 189.8Z" fill="#eef0d6"/><path d="M467 165L470.8 165.7L470.8 189.8L467 189.8Z" fill="#cfe5c4"/><path d="M453 79.5L440.5 120" fill="none" stroke="#f8f8f8" stroke-width="0.9"/><path d="M499.6 73.5C502 80 503 84 504.6 85.5L522 100.6L542 115.6L567 130.6L577.3 135.7" fill="none" stroke="#f8f8f8" stroke-width="0.9"/><path d="M452 120L475.8 114.4L504.6 118.1" fill="none" stroke="#f8f8f8" stroke-width="0.9"/><path d="M442 121L467 133L480 150" fill="none" stroke="#f8f8f8" stroke-width="0.9"/><path d="M463 117L467 133" fill="none" stroke="#f8f8f8" stroke-width="0.9"/><path d="M467 131.9L499.6 123.1L517 111.8" fill="none" stroke="#f8f8f8" stroke-width="0.9"/><path d="M492 95.6L512 109.3" fill="none" stroke="#f8f8f8" stroke-width="0.9"/><path d="M504.6 105.6L500.8 148.2" fill="none" stroke="#f8f8f8" stroke-width="0.9"/><path d="M467 143.2L499.6 139.4L534.7 136.9" fill="none" stroke="#f8f8f8" stroke-width="0.9"/><path d="M527.2 111.8L524.6 148.2" fill="none" stroke="#f8f8f8" stroke-width="0.9"/><path d="M552.2 138.2L567.3 120.6L577.3 108.1" fill="none" stroke="#f8f8f8" stroke-width="0.9"/><path d="M507.1 155.7L529.7 155.7" fill="none" stroke="#f8f8f8" stroke-width="0.9"/><path d="M543.4 174.5L557.2 183.3L577.3 170.7" fill="none" stroke="#f8f8f8" stroke-width="0.9"/><path d="M554.7 148.2L567.3 160.7L577.3 165" fill="none" stroke="#f8f8f8" stroke-width="0.9"/><path d="M470.8 165.7L503.3 163.2" fill="none" stroke="#f8f8f8" stroke-width="0.9"/><path d="M477 135.7L477 165" fill="none" stroke="#f8f8f8" stroke-width="0.9"/><path d="M534.7 183.3L549.7 189.8" fill="none" stroke="#f8f8f8" stroke-width="0.9"/><path d="M482 78L489.6 86.8" fill="none" stroke="#f8f8f8" stroke-width="0.9"/><path d="M545 73.5L541 90" fill="none" stroke="#f8f8f8" stroke-width="0.9"/><path d="M560 95L577.3 98" fill="none" stroke="#f8f8f8" stroke-width="0.9"/><path d="M455 150L498 148" fill="none" stroke="#f8f8f8" stroke-width="0.9"/><path d="M530 160L545 158L560 175" fill="none" stroke="#f8f8f8" stroke-width="0.9"/><path d="M520 183.3L508 189.8" fill="none" stroke="#f8f8f8" stroke-width="0.9"/><path d="M499.6 73.5C502 80 503 84 504.6 85.5L522 100.6L542 115.6L567 130.6L577.3 135.7" fill="none" stroke="#fbfbfb" stroke-width="1.5"/><path d="M452 101L467 104L475 108L482 103L490.8 93L494.6 86.8L504.6 84.3L517 86.8L532 85.5L538.4 83" fill="none" stroke="#a9d3e0" stroke-width="0.9"/><path d="M340 190L360 182.2L436 168L467 160.7L499.6 153.2L547.2 146.9L551 144.4L577.3 150.7" fill="none" stroke="#cfc98f" stroke-width="2.2"/><path d="M340 190L360 182.2L436 168L467 160.7L499.6 153.2L547.2 146.9L551 144.4L577.3 150.7" fill="none" stroke="#f5f6b8" stroke-width="1.4"/><path d="M275.7 115.6L286 104L292.6 104.4L298.5 130L303 140.3L306.6 156.5L310.3 166.8L336.8 161.6L339.7 184.4L340 189.8L253 189.8L253 177L276 176L291.9 174L278.7 130Z" fill="#dedddd"/><path d="M292.6 104.4L298.5 130L303 140.3L306.6 156.5L310.3 166.8L336.8 161.6L339.7 184.4" fill="none" stroke="#b9a4c4" stroke-width="0.45"/><path d="M311 166.8L336 162L338 182L313 183Z" fill="#cfe5c4"/><path d="M324 172L336 169L337 178L326 180Z" fill="#d9dcb0"/><rect x="253" y="177.5" width="13" height="7" fill="#f3d9b9"/><path d="M266 180L276 178.5L278 189.8L267 189.8Z" fill="#b6d9b0"/><rect x="197.5" y="170" width="3" height="3" fill="#b6d9b0"/><path d="M292 175L296 180L292 186L282 189.8L300 189.8L306 185Z" fill="#f0f0f0"/><path d="M173.2 73.5L171 106" fill="none" stroke="#94cb8a" stroke-width="1.0"/><path d="M142.8 116L142.8 189.8" fill="none" stroke="#94cb8a" stroke-width="1.0"/><path d="M193.8 119L190.5 189.8" fill="none" stroke="#94cb8a" stroke-width="1.0"/><path d="M283.3 73.5L284.5 104" fill="none" stroke="#94cb8a" stroke-width="1.0"/><path d="M339.7 87.7L338.3 173" fill="none" stroke="#94cb8a" stroke-width="1.0"/><path d="M382.5 104L380.6 172.5" fill="none" stroke="#94cb8a" stroke-width="1.0"/><path d="M346.3 73.5L341.9 87" fill="none" stroke="#94cb8a" stroke-width="1.0"/><path d="M142 110L142 116" fill="none" stroke="#94cb8a" stroke-width="1.0"/><path d="M142 189.8L142 73.5" fill="none" stroke="#9fd198" stroke-width="0.8" opacity="0.5"/><path d="M275.5 116.3L285 111.5" fill="none" stroke="#94cb8a" stroke-width="0.8"/><path d="M300 73.5L360 92.8L440.9 120L452 124" fill="none" stroke="#bdbdbd" stroke-width="2.6"/><path d="M300 73.5L360 92.8L440.9 120L452 124" fill="none" stroke="#ececec" stroke-width="1.8"/><path d="M302 76.5L360 95.5L440 122.6" fill="none" stroke="#9fd198" stroke-width="0.6"/><path d="M142 115.6C170 118 195 121 215 120.5C245 119.5 268 114 286 104.6" fill="none" stroke="#cfa878" stroke-width="2.1"/><path d="M142 115.6C170 118 195 121 215 120.5C245 119.5 268 114 286 104.6" fill="none" stroke="#e8c79c" stroke-width="1.2"/><path d="M142 113.9C170 116.3 195 119.3 215 118.8C245 117.8 268 112.3 285 103.2" fill="none" stroke="#a8d3a0" stroke-width="0.45"/><path d="M142 117.3C170 119.7 195 122.7 215 122.2C245 121.2 268 115.7 285 106.3" fill="none" stroke="#a8d3a0" stroke-width="0.45"/><path d="M284.6 73.5L286 104.6L289.7 133L310.3 189.8" fill="none" stroke="#d5a46e" stroke-width="2.2"/><path d="M284.6 73.5L286 104.6L289.7 133L310.3 189.8" fill="none" stroke="#f5c584" stroke-width="1.4"/><path d="M142 112.7L209.6 117.1L255 107.6L289 99.5L289 81L298.5 74.8L304 73.5" fill="none" stroke="#8a8a8a" stroke-width="0.35"/><path d="M410.7 73.5L413 88.4L417.4 111.2L419.6 130L421.8 147L430.6 148.8L441.6 131.5L465.9 85.5L508.2 81.1L524.4 87L540.5 75.6L543 73.5" fill="none" stroke="#8a8a8a" stroke-width="0.35"/><path d="M417.4 111.2L440 129.6M430.6 148.8L434.3 169.7L432 189.8" fill="none" stroke="#8a8a8a" stroke-width="0.35"/><rect x="147.1" y="112.5" width="1.2" height="1" fill="#777"/><rect x="163.20000000000002" y="113.6" width="1.2" height="1" fill="#777"/><rect x="178.4" y="114.5" width="1.2" height="1" fill="#777"/><rect x="194.4" y="115.5" width="1.2" height="1" fill="#777"/><rect x="209.0" y="116.6" width="1.2" height="1" fill="#777"/><rect x="221.9" y="113.9" width="1.2" height="1" fill="#777"/><rect x="238.9" y="110.5" width="1.2" height="1" fill="#777"/><rect x="254.4" y="107.1" width="1.2" height="1" fill="#777"/><rect x="271.4" y="103.0" width="1.2" height="1" fill="#777"/><rect x="288.4" y="99.0" width="1.2" height="1" fill="#777"/><rect x="288.4" y="80.5" width="1.2" height="1" fill="#777"/><rect x="297.9" y="74.3" width="1.2" height="1" fill="#777"/><rect x="412.4" y="87.9" width="1.2" height="1" fill="#777"/><rect x="416.79999999999995" y="110.7" width="1.2" height="1" fill="#777"/><rect x="421.2" y="146.5" width="1.2" height="1" fill="#777"/><rect x="430.0" y="148.3" width="1.2" height="1" fill="#777"/><rect x="441.0" y="131.0" width="1.2" height="1" fill="#777"/><rect x="465.29999999999995" y="85.0" width="1.2" height="1" fill="#777"/><rect x="507.59999999999997" y="80.6" width="1.2" height="1" fill="#777"/><rect x="523.8" y="86.5" width="1.2" height="1" fill="#777"/><rect x="433.7" y="169.2" width="1.2" height="1" fill="#777"/><path d="M240 126L242 147" fill="none" stroke="#d2b48c" stroke-width="0.4" stroke-dasharray="0.8 0.8"/><path d="M237.5 151C238 147.5 242 146.5 245.5 148C249 150 249 155 246 157.5C243 159.5 238 158 237.2 155Z" fill="#b9b9bf"/><path d="M243.5 151L245.5 154.5" stroke="#9bd0e8" stroke-width="0.8"/><path d="M249 152L252 151.5" stroke="#9fd198" stroke-width="0.5"/><text x="0" y="0" transform="translate(222 127.8) rotate(-13.5)" font-family="Liberation Sans" font-size="3.9" fill="#8a6aa8" letter-spacing="0.1">Піщанська сільська громада</text><text x="0" y="0" transform="translate(285.8 111.5) rotate(82)" font-family="Liberation Sans" font-size="3.3" fill="#3a2a1a" letter-spacing="0.1">Черкаська вулиця</text><rect x="294.9" y="160.1" width="11.7" height="6.7" rx="1" fill="#f6e3c8" stroke="#cfae88" stroke-width="0.35"/><text x="300.75" y="164.7" text-anchor="middle" font-family="Liberation Sans" font-size="3.4" fill="#6a5a4a">Н-08</text><text x="310.3" y="187.6" text-anchor="middle" font-family="Liberation Sans" font-size="4.6" fill="#666" stroke="#fff" stroke-width="0.6" paint-order="stroke" letter-spacing="0.3">Софіївка</text><rect x="513.4" y="106" width="21.3" height="5.8" rx="1" fill="#fff" opacity="0.95"/><text x="524.05" y="110.3" text-anchor="middle" font-family="Liberation Sans" font-size="3.5" fill="#444">О-240503</text><text x="544.7" y="142.4" text-anchor="middle" font-family="Liberation Sans" font-size="4.3" fill="#666" stroke="#fff" stroke-width="0.5" paint-order="stroke" letter-spacing="0.2">Гельмязів</text><text x="0" y="0" transform="translate(558 146) rotate(13)" font-family="Liberation Sans" font-size="3.3" fill="#444">Центральна</text><path d="M340.9 91.7L382.1 103.5L379.4 171.9L339.1 171.9Z" fill="none" stroke="#7d8cf5" stroke-width="0.7"/><clipPath id="fl"><path d="M340.9 91.7L359.8 97.1L359.8 171.9L339.1 171.9Z"/></clipPath><clipPath id="fr"><path d="M359.8 97.1L382.1 103.5L379.4 171.9L359.8 171.9Z"/></clipPath><g clip-path="url(#fl)"><rect x="338" y="90" width="23" height="47" fill="#c3f700"/><rect x="338" y="136.4" width="23" height="36" fill="#ffff00"/><rect x="345.0" y="134.9" width="0.9" height="1.1" fill="#22dd22"/><rect x="351.6" y="98.0" width="0.6" height="1.3" fill="#22dd22"/><rect x="345.4" y="111.0" width="1.4" height="1.0" fill="#22dd22"/><rect x="355.2" y="129.7" width="1.1" height="0.7" fill="#22dd22"/><rect x="351.8" y="159.8" width="1.0" height="1.2" fill="#99ee00"/><rect x="352.4" y="97.9" width="1.2" height="1.1" fill="#22dd22"/><rect x="346.1" y="95.4" width="1.3" height="1.0" fill="#22dd22"/><rect x="353.2" y="160.7" width="1.2" height="1.3" fill="#99ee00"/><rect x="347.7" y="154.7" width="1.0" height="1.3" fill="#99ee00"/><rect x="355.9" y="100.5" width="0.7" height="0.8" fill="#22dd22"/><rect x="357.4" y="126.6" width="1.1" height="0.8" fill="#22dd22"/><rect x="349.6" y="122.7" width="0.9" height="1.1" fill="#22dd22"/><rect x="350.9" y="162.6" width="1.1" height="1.3" fill="#99ee00"/><rect x="355.6" y="169.3" width="1.1" height="0.7" fill="#99ee00"/><rect x="355.6" y="167.3" width="1.3" height="1.1" fill="#99ee00"/><rect x="353.1" y="109.3" width="1.3" height="1.1" fill="#22dd22"/><rect x="345.8" y="97.9" width="1.3" height="1.4" fill="#22dd22"/><rect x="342.5" y="154.6" width="0.9" height="0.7" fill="#99ee00"/><rect x="346.0" y="152.2" width="1.3" height="0.6" fill="#99ee00"/><rect x="351.4" y="96.5" width="1.2" height="0.9" fill="#22dd22"/><rect x="356.0" y="168.5" width="1.0" height="1.4" fill="#99ee00"/><rect x="346.3" y="98.9" width="1.1" height="0.6" fill="#22dd22"/><rect x="344.4" y="124.4" width="1.1" height="0.7" fill="#22dd22"/><rect x="341.7" y="159.8" width="0.9" height="1.4" fill="#99ee00"/><rect x="356.2" y="122.1" width="1.0" height="1.0" fill="#22dd22"/><rect x="351.9" y="138.9" width="1.0" height="1.1" fill="#99ee00"/><rect x="357.0" y="132.0" width="0.9" height="1.2" fill="#22dd22"/><rect x="345.0" y="116.2" width="1.4" height="1.0" fill="#22dd22"/><rect x="350.3" y="93.9" width="0.9" height="1.1" fill="#22dd22"/><rect x="341.3" y="140.4" width="1.1" height="0.6" fill="#99ee00"/><rect x="351.7" y="128.9" width="1.1" height="0.9" fill="#22dd22"/><rect x="353.0" y="149.8" width="0.6" height="0.6" fill="#99ee00"/><rect x="352.5" y="167.2" width="0.8" height="1.0" fill="#99ee00"/><rect x="351.1" y="117.6" width="0.9" height="0.9" fill="#22dd22"/><rect x="347.3" y="138.9" width="0.8" height="0.9" fill="#99ee00"/><rect x="354.1" y="95.1" width="1.1" height="1.2" fill="#22dd22"/><rect x="346.3" y="110.1" width="1.2" height="0.8" fill="#22dd22"/><rect x="344.2" y="126.5" width="1.2" height="0.7" fill="#22dd22"/><rect x="346.5" y="118.7" width="1.3" height="1.0" fill="#22dd22"/><rect x="355.5" y="106.0" width="0.9" height="1.1" fill="#22dd22"/></g><g clip-path="url(#fr)"><rect x="359" y="95" width="24" height="30" fill="#ffc000"/><path d="M359.8 97.1L382.1 103.5L382 105.5L374 103.5L366 104L361 103L360 104Z" fill="#ff9000"/><rect x="359" y="124.4" width="24" height="48" fill="#ff8800"/></g><rect x="359.05" y="73.5" width="1.5" height="116.3" fill="#fff"/><circle cx="360" cy="131.3" r="7.3" fill="#fff"/><rect x="357.2" y="127.8" width="0.7" height="8.1" fill="#777"/><rect x="362.1" y="127.8" width="0.7" height="8.1" fill="#777"/><rect x="358.9" y="127.8" width="0.5" height="8.1" fill="#bbb"/><rect x="360.6" y="127.8" width="0.5" height="8.1" fill="#bbb"/></svg>
<div class="b" style="left:146.00px;top:77.10px;width:10.50px;height:20.70px;background:#fff;border-radius:1.2px;box-shadow:0 0 0 0.7px rgba(0,0,0,0.18);"></div>
<div class="b" style="left:146.00px;top:87.20px;width:10.50px;height:0.40px;background:#ddd;"></div>
<svg class="b" style="left:146px;top:77.1px" width="10.5" height="10" viewBox="0 0 10.5 10"><path d="M3.3 5.1H7.2M5.25 3.1V7.1" stroke="#222" stroke-width="0.85"/></svg>
<svg class="b" style="left:146px;top:87.5px" width="10.5" height="10" viewBox="0 0 10.5 10"><path d="M3.3 5H7.2" stroke="#222" stroke-width="0.8"/></svg>
<div class="b" style="left:537.90px;top:77.70px;width:35.20px;height:12.70px;background:#fff;border-radius:1.5px;box-shadow:0 0 0 0.7px rgba(0,0,0,0.16);"></div>
<svg class="b" style="left:541px;top:78.5px" width="11" height="11" viewBox="0 0 11 11">
<path d="M0.7 6L5.5 8.6L10.3 6V7.6L5.5 10.2L0.7 7.6Z" fill="#9a9a9a"/>
<path d="M0.7 4.6L5.5 7.2L10.3 4.6V6.2L5.5 8.8L0.7 6.2Z" fill="#b0b0b0"/>
<path d="M0.7 3.6L5.5 1L10.3 3.6L5.5 6.2Z" fill="#d4d4d4"/><path d="M0.7 3.6L5.5 6.2V7.6L0.7 5Z" fill="#a8a8a8"/><path d="M10.3 3.6L5.5 6.2V7.6L10.3 5Z" fill="#8c8c8c"/>
</svg>
<div class="t" style="left:555.00px;top:81.54px;font-size:5.5px;color:#222;font-weight:normal;">Мапи</div>
<div class="b" style="left:544.80px;top:184.10px;width:32.50px;height:5.70px;background:rgba(255,255,255,0.8);"></div>
<div class="t" style="left:545.80px;top:185.43px;font-size:4.1px;color:#0078a8;font-weight:normal;">Leaflet <span style="color:#333">|</span> PreAgri</div>
<svg class="b" style="left:601px;top:121px;overflow:hidden" width="129.20" height="125.00" viewBox="601 121 129.20 125.00"><rect x="601" y="121" width="129.20000000000005" height="125" fill="#eef0d6"/><path d="M601 165L604 180L613 208.5L616 218.2L642.2 212.2L645.2 235.5L634 237L634 246L601 246Z" fill="#dedddd"/><path d="M601 165L604 180L613 208.5L616 218.2L642.2 212.2L645.2 235.5L634 237L634 246" fill="none" stroke="#b9a4c4" stroke-width="0.45"/><path d="M616.5 218.5L642 212.6L643.5 231L620 234Z" fill="#cfe5c4"/><path d="M630 224L642 221L642.5 229L632 230Z" fill="#d9dcb0"/><path d="M723 148L730.2 147L730.2 166L720 160Z" fill="#f3d9b9"/><path d="M721 166.5L730.2 167L730.2 220.5L721 221.5Z" fill="#cfe5c4"/><rect x="687" y="229.5" width="7.5" height="4.5" fill="#f3d9b9"/><path d="M645.3 140L643.2 224" fill="none" stroke="#94cb8a" stroke-width="1.0"/><path d="M688.5 156L688 224" fill="none" stroke="#94cb8a" stroke-width="1.0"/><path d="M689 232L692.5 246" fill="none" stroke="#94cb8a" stroke-width="1.0"/><path d="M601 121.5L646 136.5" fill="none" stroke="#94cb8a" stroke-width="1.0"/><path d="M654.2 121L646.7 138.2" fill="none" stroke="#a8d3a0" stroke-width="1.3"/><path d="M654.2 121L646.7 138.2" fill="none" stroke="#eef0d6" stroke-width="0.5"/><path d="M601 124.3L668 144.8L730.2 167.2" fill="none" stroke="#c0c0c0" stroke-width="2.6"/><path d="M601 124.3L668 144.8L730.2 167.2" fill="none" stroke="#ececec" stroke-width="1.8"/><path d="M601 198L617.5 246" fill="none" stroke="#d5a46e" stroke-width="2.2"/><path d="M601 198L617.5 246" fill="none" stroke="#f5c584" stroke-width="1.4"/><path d="M601 194L603 200" fill="none" stroke="#9a6a3a" stroke-width="1.6"/><path d="M635.5 246L668 233.2L686.5 228L730.2 221.2" fill="none" stroke="#cfc98f" stroke-width="2.2"/><path d="M635.5 246L668 233.2L686.5 228L730.2 221.2" fill="none" stroke="#f5f6b8" stroke-width="1.4"/><path d="M716 121L718.8 140L722.5 163L725 175L727 198" fill="none" stroke="#8a8a8a" stroke-width="0.35"/><path d="M686 157.5L700 161.5M703 167L722.5 163" fill="none" stroke="#8a8a8a" stroke-width="0.35"/><rect x="718.1999999999999" y="139.5" width="1.2" height="1" fill="#777"/><rect x="721.9" y="162.5" width="1.2" height="1" fill="#777"/><rect x="724.4" y="174.5" width="1.2" height="1" fill="#777"/><rect x="726.4" y="197.5" width="1.2" height="1" fill="#777"/><rect x="699.4" y="161.0" width="1.2" height="1" fill="#777"/><rect x="603.4" y="126.5" width="1.2" height="1" fill="#777"/><path d="M646.7 143.5L687.2 156.2L686.5 223.8L644.2 223.8Z" fill="none" stroke="#5b6cf2" stroke-width="1.15"/><rect x="601" y="212.2" width="10.5" height="5.3" rx="0.8" fill="#f6e3c8" stroke="#cfae88" stroke-width="0.3"/><text x="606.3" y="216" text-anchor="middle" font-family="Liberation Sans" font-size="3.1" fill="#6a5a4a">Н-08</text><text x="618" y="240.5" text-anchor="middle" font-family="Liberation Sans" font-size="4.4" fill="#666" stroke="#fff" stroke-width="0.6" paint-order="stroke" letter-spacing="0.3">Софіївка</text></svg>
<div class="b" style="left:604.70px;top:125.50px;width:10.10px;height:20.20px;background:#fff;border-radius:1.2px;box-shadow:0 0 0 0.7px rgba(0,0,0,0.18);"></div>
<div class="b" style="left:604.70px;top:135.40px;width:10.10px;height:0.40px;background:#ddd;"></div>
<svg class="b" style="left:604.7px;top:125.5px" width="10.1" height="10" viewBox="0 0 10.1 10"><path d="M3.1 5.1H7M5.05 3.1V7.1" stroke="#222" stroke-width="0.85"/></svg>
<svg class="b" style="left:604.7px;top:135.6px" width="10.1" height="10" viewBox="0 0 10.1 10"><path d="M3.1 5H7" stroke="#222" stroke-width="0.8"/></svg>
<div class="b" style="left:690.70px;top:124.70px;width:35.50px;height:14.00px;background:#fff;border-radius:1.5px;box-shadow:0 0 0 0.7px rgba(0,0,0,0.16);"></div>
<svg class="b" style="left:694px;top:126.2px" width="11" height="11" viewBox="0 0 11 11">
<path d="M0.7 6L5.5 8.6L10.3 6V7.6L5.5 10.2L0.7 7.6Z" fill="#9a9a9a"/>
<path d="M0.7 4.6L5.5 7.2L10.3 4.6V6.2L5.5 8.8L0.7 6.2Z" fill="#b0b0b0"/>
<path d="M0.7 3.6L5.5 1L10.3 3.6L5.5 6.2Z" fill="#d4d4d4"/><path d="M0.7 3.6L5.5 6.2V7.6L0.7 5Z" fill="#a8a8a8"/><path d="M10.3 3.6L5.5 6.2V7.6L10.3 5Z" fill="#8c8c8c"/>
</svg>
<div class="t" style="left:708.00px;top:129.44px;font-size:5.5px;color:#222;font-weight:normal;">Мапи</div>
<div class="b" style="left:697.00px;top:240.30px;width:33.20px;height:5.70px;background:rgba(255,255,255,0.8);"></div>
<div class="t" style="left:697.80px;top:241.63px;font-size:4.1px;color:#0078a8;font-weight:normal;">Leaflet <span style="color:#333">|</span> PreAgri</div>
</body></html>
